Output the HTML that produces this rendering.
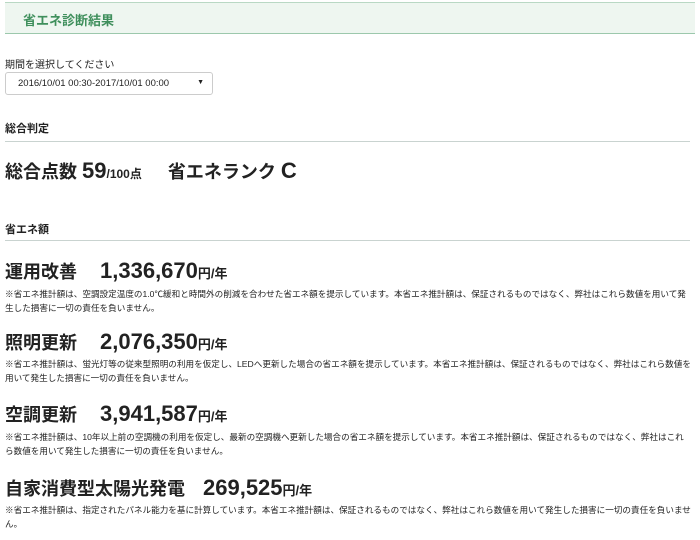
<!DOCTYPE html>
<html><head><meta charset="utf-8"><style>
*{margin:0;padding:0;box-sizing:border-box}
body{width:700px;height:540px;background:#fff;font-family:"Liberation Sans","Noto Sans CJK JP",sans-serif;color:#222;position:relative;overflow:hidden}
.a{position:absolute;white-space:nowrap}
.hdr{position:absolute;left:5px;top:2px;width:690px;height:32px;background:#eef6f0;border-top:1px solid #b9d8c4;border-bottom:1px solid #9cc8ac}
.hdr span{position:absolute;left:18px;top:7px;font-size:13px;font-weight:bold;color:#3f8f5c}
.sel{position:absolute;left:5px;top:72px;width:208px;height:23px;border:1px solid #ccc;border-radius:3px;font-size:9.5px;padding:5px 0 0 12px}
.sel i{position:absolute;right:8px;top:6px;font-style:normal;font-size:7px}
.line{position:absolute;left:5px;width:685px;height:1px;background:#c9d3d0}
.sec{font-size:11px;font-weight:bold}
.big{font-size:18px;font-weight:bold;line-height:1}
.num{font-size:22px;font-weight:bold}
.u{font-size:13px;font-weight:bold}
.n{font-size:8.6px;color:#222;line-height:14px;left:5px;width:687px;white-space:normal}
</style></head><body>
<div class="hdr"><span>省エネ診断結果</span></div>
<div class="a" style="left:5px;top:56px;font-size:10px">期間を選択してください</div>
<div class="sel">2016/10/01 00:30-2017/10/01 00:00<i>▼</i></div>
<div class="a sec" style="left:5px;top:120px">総合判定</div>
<div class="line" style="top:141px"></div>
<div class="a big" style="left:5px;top:160px">総合点数 <span class="num">59</span><span style="font-size:12px">/100点</span><span style="display:inline-block;width:26px"></span>省エネランク <span class="num">C</span></div>
<div class="a sec" style="left:5px;top:221px">省エネ額</div>
<div class="line" style="top:240px"></div>

<div class="a big" style="left:5px;top:260px">運用改善　 <span class="num">1,336,670</span><span class="u">円/年</span></div>
<div class="a n" style="top:287px">※省エネ推計額は、空調設定温度の1.0℃緩和と時間外の削減を合わせた省エネ額を提示しています。本省エネ推計額は、保証されるものではなく、弊社はこれら数値を用いて発生した損害に一切の責任を負いません。</div>

<div class="a big" style="left:5px;top:331px">照明更新　 <span class="num">2,076,350</span><span class="u">円/年</span></div>
<div class="a n" style="top:357px">※省エネ推計額は、蛍光灯等の従来型照明の利用を仮定し、LEDへ更新した場合の省エネ額を提示しています。本省エネ推計額は、保証されるものではなく、弊社はこれら数値を用いて発生した損害に一切の責任を負いません。</div>

<div class="a big" style="left:5px;top:403px">空調更新　 <span class="num">3,941,587</span><span class="u">円/年</span></div>
<div class="a n" style="top:430px">※省エネ推計額は、10年以上前の空調機の利用を仮定し、最新の空調機へ更新した場合の省エネ額を提示しています。本省エネ推計額は、保証されるものではなく、弊社はこれら数値を用いて発生した損害に一切の責任を負いません。</div>

<div class="a big" style="left:5px;top:477px">自家消費型太陽光発電　<span class="num">269,525</span><span class="u">円/年</span></div>
<div class="a n" style="top:503px">※省エネ推計額は、指定されたパネル能力を基に計算しています。本省エネ推計額は、保証されるものではなく、弊社はこれら数値を用いて発生した損害に一切の責任を負いません。</div>
</body></html>
